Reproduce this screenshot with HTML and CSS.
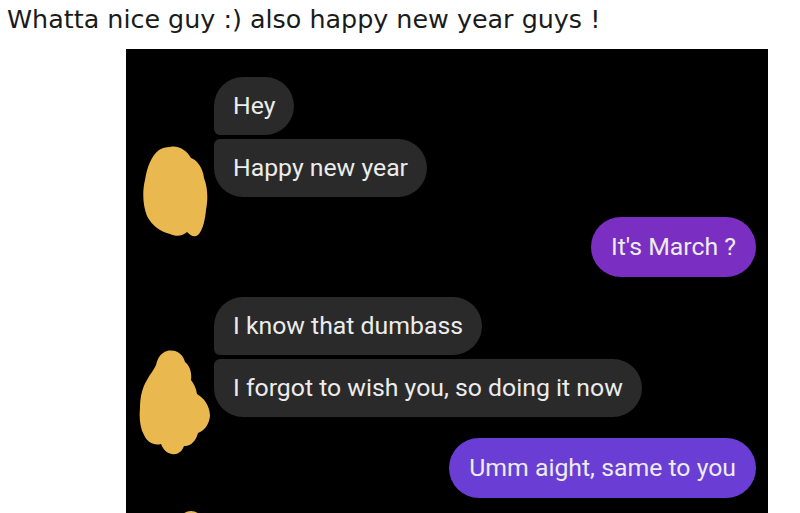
FILE: index.html
```html
<!DOCTYPE html>
<html lang="en">
<head>
<meta charset="utf-8">
<title>Whatta nice guy</title>
<link rel="stylesheet" href="styles.css">
</head>
<body>
<div class="post">
  <h1 class="title">Whatta nice guy :) also happy new year guys !</h1>
  <div class="shot">
    <div class="group g1">
      <svg class="blob b1" viewBox="0 0 65 91" width="65" height="91" aria-hidden="true">
        <path d="M27 1 C36 -1 44 5 48 12 C54 14 60 22 61 32 C65 42 65 54 63 64 C62 74 60 84 55 89 C51 92 47 89 44 86 C40 90 33 91 27 88 C18 86 9 80 4 70 C0 60 -1 46 2 34 C4 22 8 10 16 4 C19 2 23 1 27 1 Z" fill="#e9b84f"/>
      </svg>
      <div class="bubble in top">Hey</div>
      <div class="bubble in bottom">Happy new year</div>
    </div>
    <div class="bubble out violet">It's March ?</div>
    <div class="group g2">
      <svg class="blob b2" viewBox="0 0 71 105" width="71" height="105" aria-hidden="true">
        <path d="M28 1 C37 -1 44 4 46 12 C51 16 53 23 52 30 C55 34 57 38 58 44 C65 48 71 56 71 66 C70 75 65 81 59 83 C57 91 51 97 45 96 C43 102 38 105 33 104 C27 103 24 99 22 94 C15 96 8 92 5 85 C1 78 0 68 1 58 C1 48 3 38 8 30 C11 24 15 20 17 15 C19 7 22 3 28 1 Z" fill="#e9b84f"/>
      </svg>
      <div class="bubble in top">I know that dumbass</div>
      <div class="bubble in bottom">I forgot to wish you, so doing it now</div>
    </div>
    <div class="bubble out indigo">Umm aight, same to you</div>
    <svg class="blob b3" viewBox="0 0 30 30" width="30" height="30" aria-hidden="true">
      <ellipse cx="15" cy="16" rx="13" ry="14" fill="#e9b84f"/>
    </svg>
  </div>
</div>
</body>
</html>
```

FILE: styles.css
```css
* { box-sizing: border-box; }

html, body {
  margin: 0;
  padding: 0;
  background: #ffffff;
}

.post {
  width: 800px;
  height: 513px;
  overflow: hidden;
}

.title {
  margin: 0;
  height: 49px;
  padding: 3px 0 0 7px;
  font-family: "DejaVu Sans", "Noto Sans", sans-serif;
  font-weight: 400;
  font-size: 25.4px;
  line-height: 32px;
  color: #1a1a1b;
  white-space: nowrap;
}

.shot {
  position: relative;
  overflow: hidden;
  margin-left: 126px;
  width: 642px;
  height: 464px;
  background: #000000;
  display: flex;
  flex-direction: column;
  gap: 20px;
  padding: 28px 12px 0 0;
}

.group {
  position: relative;
  display: flex;
  flex-direction: column;
  align-items: flex-start;
  gap: 4px;
  padding-left: 88px;
}

.bubble {
  font-family: Roboto, "Noto Sans", sans-serif;
  font-size: 24.8px;
  color: #ececec;
  height: 58px;
  line-height: 58px;
  padding: 0 19px;
  border-radius: 29px;
  white-space: nowrap;
}

.bubble.in {
  background: #2a2a2a;
}

.bubble.in.top {
  border-bottom-left-radius: 6px;
}

.bubble.in.bottom {
  border-top-left-radius: 6px;
}

.bubble.out {
  align-self: flex-end;
  height: 60px;
  line-height: 60px;
  border-radius: 30px;
  padding: 0 20px;
}

.violet {
  background: #7a2ec2;
}

.indigo {
  background: #6a3dd4;
  margin-top: 1px;
}

.blob {
  position: absolute;
  display: block;
}

.b1 {
  left: 17px;
  top: 69px;
}

.b2 {
  left: 13px;
  top: 53px;
}

.b3 {
  left: 50px;
  top: 460px;
}
```
